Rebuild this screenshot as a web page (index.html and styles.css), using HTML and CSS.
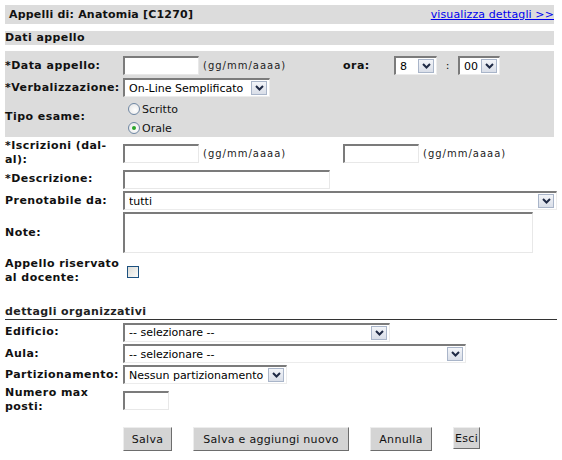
FILE: index.html
```html
<!DOCTYPE html>
<html lang="it">
<head>
<meta charset="utf-8">
<title>Appelli</title>
<link rel="stylesheet" href="styles.css">
</head>
<body>
<div class="titlebar">
  <span class="title">Appelli di: Anatomia [C1270]</span>
  <a class="link" href="#">visualizza dettagli &gt;&gt;</a>
</div>
<div class="section">Dati appello</div>

<div class="grayblock">
  <div class="row r1">
    <div class="lbl">*Data appello:</div>
    <div class="fld">
      <div class="dategroup">
        <input class="inp w76" type="text"><span class="hint">(gg/mm/aaaa)</span>
      </div>
      <span class="lbl ora">ora:</span>
      <div class="sel w43"><span class="txt">8</span><span class="arr"><svg width="9" height="6" viewBox="0 0 9 6"><path d="M1 1 L4.5 4.5 L8 1" fill="none" stroke="#1f2a45" stroke-width="2"/></svg></span></div>
      <span class="colon">:</span>
      <div class="sel w42"><span class="txt">00</span><span class="arr"><svg width="9" height="6" viewBox="0 0 9 6"><path d="M1 1 L4.5 4.5 L8 1" fill="none" stroke="#1f2a45" stroke-width="2"/></svg></span></div>
    </div>
  </div>
  <div class="row r2">
    <div class="lbl">*Verbalizzazione:</div>
    <div class="fld">
      <div class="sel w147"><span class="txt">On-Line Semplificato</span><span class="arr"><svg width="9" height="6" viewBox="0 0 9 6"><path d="M1 1 L4.5 4.5 L8 1" fill="none" stroke="#1f2a45" stroke-width="2"/></svg></span></div>
    </div>
  </div>
  <div class="row r3">
    <div class="lbl">Tipo esame:</div>
    <div class="fld radios">
      <label class="radio"><span class="rb"></span>Scritto</label>
      <label class="radio"><span class="rb on"></span>Orale</label>
    </div>
  </div>
</div>

<div class="rows">
  <div class="row h28">
    <div class="lbl">*Iscrizioni (dal-<br>al):</div>
    <div class="fld">
      <div class="dategroup">
        <input class="inp w76" type="text"><span class="hint">(gg/mm/aaaa)</span>
      </div>
      <input class="inp w76" type="text"><span class="hint">(gg/mm/aaaa)</span>
    </div>
  </div>
  <div class="row h20">
    <div class="lbl">*Descrizione:</div>
    <div class="fld"><input class="inp w207" type="text"></div>
  </div>
  <div class="row h19">
    <div class="lbl">Prenotabile da:</div>
    <div class="fld">
      <div class="sel w434"><span class="txt">tutti</span><span class="arr"><svg width="9" height="6" viewBox="0 0 9 6"><path d="M1 1 L4.5 4.5 L8 1" fill="none" stroke="#1f2a45" stroke-width="2"/></svg></span></div>
    </div>
  </div>
  <div class="row h41">
    <div class="lbl">Note:</div>
    <div class="fld"><textarea class="inp ta"></textarea></div>
  </div>
  <div class="row h32">
    <div class="lbl">Appello riservato<br>al docente:</div>
    <div class="fld"><span class="cb"></span></div>
  </div>
</div>

<div class="subhead">dettagli organizzativi</div>

<div class="rows">
  <div class="row h20">
    <div class="lbl">Edificio:</div>
    <div class="fld">
      <div class="sel w267"><span class="txt">-- selezionare --</span><span class="arr"><svg width="9" height="6" viewBox="0 0 9 6"><path d="M1 1 L4.5 4.5 L8 1" fill="none" stroke="#1f2a45" stroke-width="2"/></svg></span></div>
    </div>
  </div>
  <div class="row h19">
    <div class="lbl">Aula:</div>
    <div class="fld">
      <div class="sel w343"><span class="txt">-- selezionare --</span><span class="arr"><svg width="9" height="6" viewBox="0 0 9 6"><path d="M1 1 L4.5 4.5 L8 1" fill="none" stroke="#1f2a45" stroke-width="2"/></svg></span></div>
    </div>
  </div>
  <div class="row h19">
    <div class="lbl">Partizionamento:</div>
    <div class="fld">
      <div class="sel w164"><span class="txt">Nessun partizionamento</span><span class="arr"><svg width="9" height="6" viewBox="0 0 9 6"><path d="M1 1 L4.5 4.5 L8 1" fill="none" stroke="#1f2a45" stroke-width="2"/></svg></span></div>
    </div>
  </div>
  <div class="row h28">
    <div class="lbl">Numero max<br>posti:</div>
    <div class="fld"><input class="inp w46" type="text"></div>
  </div>
</div>

<div class="buttons">
  <button class="btn b-salva">Salva</button>
  <button class="btn b-nuovo">Salva e aggiungi nuovo</button>
  <button class="btn b-annulla">Annulla</button>
  <button class="btn b-esci">Esci</button>
</div>
</body>
</html>
```

FILE: styles.css
```css
* { box-sizing: border-box; }
html, body { margin: 0; padding: 0; background: #fff; }
body {
  padding: 5px 5px 0 5px;
  font-family: "DejaVu Sans", Verdana, sans-serif;
  font-size: 11px;
  color: #111;
  width: 562px;
}
.titlebar {
  width: 549px;
  height: 19px;
  background: #dcdcdc;
  display: flex;
  align-items: center;
  justify-content: space-between;
  padding-left: 4px;
}
.title { font-weight: bold; font-size: 11px; letter-spacing: 0.2px; }
.link { color: #0000ee; text-decoration: underline; font-size: 11px; letter-spacing: 0.1px; }
.section {
  margin-top: 7px;
  width: 549px;
  height: 14px;
  line-height: 14px;
  background: #dcdcdc;
  font-weight: bold;
  letter-spacing: 0.4px;
}
.grayblock {
  margin-top: 6px;
  width: 549px;
  background: #dcdcdc;
  padding: 5px 0 2px 0;
  display: flex;
  flex-direction: column;
}
.row {
  display: grid;
  grid-template-columns: 118px 1fr;
  align-items: center;
}
.r1 { height: 19px; }
.r2 { height: 19px; margin-top: 3px; }
.r3 { height: 36px; margin-top: 2px; }
.rows {
  display: flex;
  flex-direction: column;
  gap: 2px;
  margin-top: 2px;
}
.h19 { height: 19px; }
.h20 { height: 20px; }
.h28 { height: 28px; }
.h32 { height: 32px; }
.h41 { height: 41px; }
.lbl { font-weight: bold; line-height: 14px; white-space: nowrap; letter-spacing: 0.45px; }
.fld { display: flex; align-items: center; height: 100%; }
.dategroup { display: flex; align-items: center; width: 220px; }
.hint { font-size: 10px; margin-left: 4px; color: #222; letter-spacing: 1px; }
.ora { width: 51px; }
.colon { width: 21px; text-align: center; }

.inp {
  height: 19px;
  padding: 0 3px;
  border-top: 2px solid #7b7b7b;
  border-left: 2px solid #7b7b7b;
  border-right: 1px solid #e8e8e8;
  border-bottom: 1px solid #e8e8e8;
  background: #fff;
  font: 11px "DejaVu Sans", sans-serif;
  outline: none;
}
.w76 { width: 76px; }
.w207 { width: 207px; }
.w46 { width: 46px; }
.ta { width: 410px; height: 41px; resize: none; }

.sel {
  height: 19px;
  display: flex;
  align-items: center;
  padding-left: 4px;
  padding-right: 2px;
  border-top: 2px solid #7b7b7b;
  border-left: 2px solid #7b7b7b;
  border-right: 1px solid #ececec;
  border-bottom: 1px solid #ececec;
  background: #fff;
  font: 11px "DejaVu Sans", sans-serif;
  color: #000;
}
.sel .txt { flex: 1; white-space: nowrap; overflow: hidden; }
.sel .arr {
  width: 16px;
  height: 14px;
  border: 1px solid #a9b5c9;
  background: linear-gradient(#f3f5f9, #d9dee8);
  display: flex;
  align-items: center;
  justify-content: center;
  flex: none;
}
.w43 { width: 43px; }
.w42 { width: 42px; }
.w147 { width: 147px; }
.w434 { width: 434px; }
.w267 { width: 267px; }
.w343 { width: 343px; }
.w164 { width: 164px; }

.radios { flex-direction: column; align-items: flex-start; justify-content: center; gap: 6px; padding-left: 5px; padding-top: 3px; }
.radio { display: flex; align-items: center; gap: 2px; font: 11px "DejaVu Sans", sans-serif; height: 13px; }
.rb {
  width: 12px; height: 12px; border-radius: 50%;
  border: 1px solid #6f87a3;
  background: radial-gradient(circle at 60% 60%, #fff, #e2e2e2);
  display: inline-flex; align-items: center; justify-content: center;
}
.rb.on::after {
  content: "";
  width: 4px; height: 4px; border-radius: 50%;
  background: #2aa52a;
}
.cb {
  width: 12px; height: 12px; margin-left: 4px; margin-top: 2px;
  border: 1px solid #1c5180;
  background: linear-gradient(135deg, #dcdcd7, #fbfbf9);
}

.subhead {
  margin-top: 18px;
  width: 552px;
  height: 15px;
  line-height: 14px;
  border-bottom: 1px solid #333;
  font-weight: bold;
  font-size: 11px;
  color: #222;
  letter-spacing: 0.4px;
}

.buttons {
  margin-top: 13px;
  padding-left: 118px;
  display: flex;
  align-items: flex-start;
  gap: 21px;
}
.btn {
  height: 24px;
  padding: 0;
  background: #d4d4d4;
  border-top: 1px solid #ededed;
  border-left: 1px solid #ededed;
  border-right: 1px solid #6d6d6d;
  border-bottom: 1px solid #6d6d6d;
  font: 11px "DejaVu Sans", sans-serif;
  letter-spacing: 0.3px;
  color: #111;
}
.b-salva { width: 49px; }
.b-nuovo { width: 156px; }
.b-annulla { width: 62px; }
.b-esci { width: 27px; height: 22px; }
```
